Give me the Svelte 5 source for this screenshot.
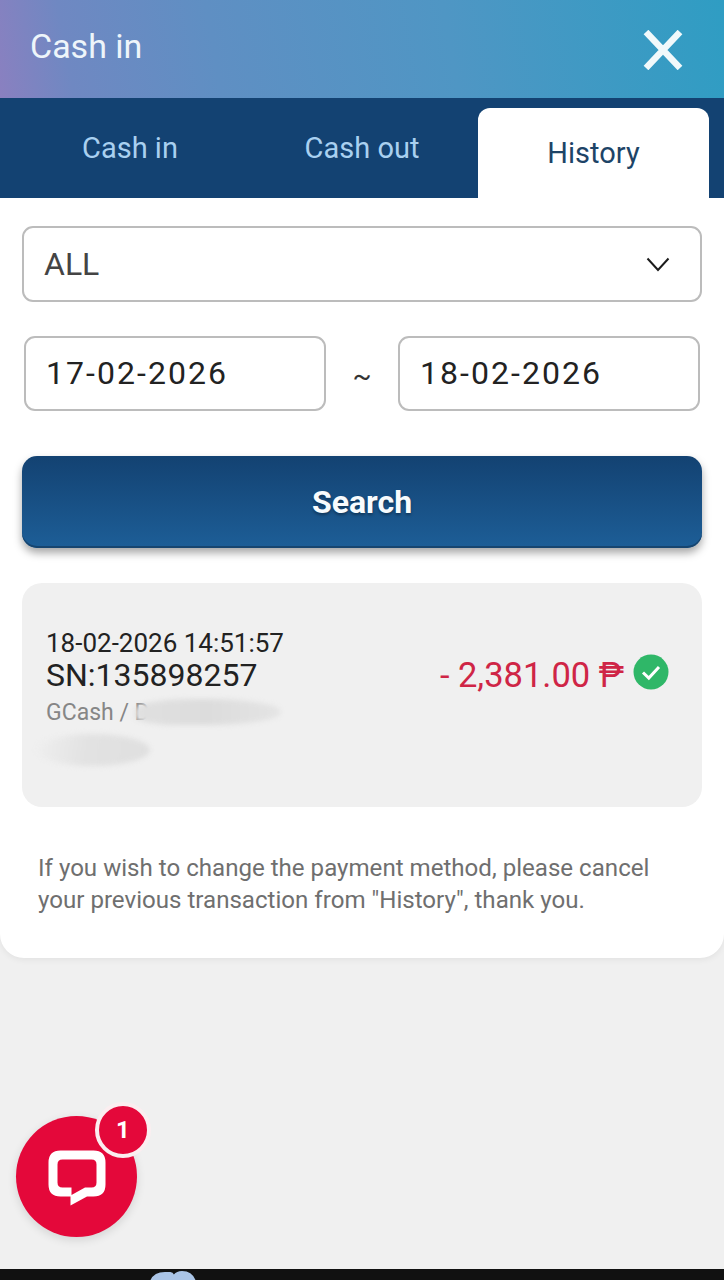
<script lang="ts">
const tabs = ["Cash in", "Cash out"];
</script>

<div class="page">
  <div class="panel">
    <header class="top">
      <span class="title">Cash in</span>
      <svg class="close" viewBox="0 0 40 40" aria-label="Close">
        <path d="M3 2 L37 38 M37 2 L3 38" stroke="#f1f9fb" stroke-width="6.5" fill="none" />
      </svg>
    </header>

    <nav class="tabs">
      {#each tabs as tab}
        <button class="tab">{tab}</button>
      {/each}
      <button class="tab on">History</button>
    </nav>

    <div class="body">
      <div class="select">
        <span>ALL</span>
        <svg class="chev" viewBox="0 0 24 15"><path d="M1.5 1.5 L12 13 L22.5 1.5" fill="none" stroke="#1c1c1c" stroke-width="2" /></svg>
      </div>

      <div class="dates">
        <div class="date">17-02-2026</div>
        <span class="tilde">~</span>
        <div class="date">18-02-2026</div>
      </div>

      <button class="search">Search</button>

      <div class="card">
        <div class="info">
          <div class="when">18-02-2026 14:51:57</div>
          <div class="sn">SN:135898257</div>
          <div class="method">GCash / D</div>
          <!-- redaction smears from the source screenshot -->
          <i class="smear one"></i>
          <i class="smear two"></i>
        </div>
        <div class="amount">
          <span>- 2,381.00 ₱</span>
          <svg class="ok" viewBox="0 0 36 36">
            <circle cx="18" cy="18" r="17.5" fill="#2fb768" />
            <path d="M10 18.5 L15.8 24 L26 13" fill="none" stroke="#fff" stroke-width="3" />
          </svg>
        </div>
      </div>

      <p class="note">If you wish to change the payment method, please cancel your previous transaction from "History", thank you.</p>
    </div>
  </div>

  <div class="chat">
    <svg viewBox="0 0 60 60" class="bubble">
      <path d="M13.5 2.5 H46.5 Q58.5 2.5 58.5 14.5 V36.5 Q58.5 48.5 46.5 48.5 H40 L23.5 57.5 V48.5 H13.5 Q1.5 48.5 1.5 36.5 V14.5 Q1.5 2.5 13.5 2.5 Z M15.5 11.5 Q10.5 11.5 10.5 16.5 V34.5 Q10.5 39.5 15.5 39.5 H24.5 V47 L38 39.5 H44.5 Q49.5 39.5 49.5 34.5 V16.5 Q49.5 11.5 44.5 11.5 Z" fill="#fff" fill-rule="evenodd" />
    </svg>
    <span class="badge">1</span>
  </div>

  <div class="navbar">
    <svg class="navbit" viewBox="0 0 50 10"><path d="M0 10 Q4 1 16 1 H22 Q25 1 26 4 Q29 0 35 0 Q46 0 50 10 Z" fill="#aac4e6" /></svg>
  </div>
</div>

<style>
  :global(body) {
    margin: 0;
    background: #f0f0f0;
    font-family: Roboto, "Liberation Sans", sans-serif;
  }
  .page {
    position: relative;
    height: 1280px;
    overflow: hidden;
    display: flex;
    flex-direction: column;
    background: #f0f0f0;
  }
  .panel {
    background: #fff;
    border-radius: 0 0 24px 24px;
    box-shadow: 0 2px 6px rgba(0, 0, 0, 0.06);
    overflow: hidden;
  }
  .top {
    height: 98px;
    box-sizing: border-box;
    padding: 0 41px 0 30px;
    display: flex;
    align-items: center;
    justify-content: space-between;
    background: linear-gradient(80deg, #8a80c0 0%, #6f88c2 10%, #5f8fc3 30%, #4f96c4 62%, #2f9dc3 100%);
  }
  .title {
    font-size: 34px;
    color: #eef5fa;
    margin-top: -6px;
  }
  .close {
    width: 40px;
    height: 40px;
    margin-top: 2px;
  }
  .tabs {
    height: 100px;
    box-sizing: border-box;
    padding: 10px 15px 0 14px;
    display: grid;
    grid-template-columns: 232px 232px 231px;
    background: #134272;
  }
  .tab {
    border: 0;
    background: none;
    padding: 0 0 10px;
    font: inherit;
    font-size: 29px;
    color: #a9d0f0;
  }
  .tab.on {
    padding: 0;
    background: #fff;
    color: #1d4467;
    border-radius: 12px 12px 0 0;
  }
  .body {
    padding: 28px 22px 42px;
  }
  .select {
    height: 76px;
    box-sizing: border-box;
    padding: 0 30px 0 20px;
    display: flex;
    align-items: center;
    justify-content: space-between;
    border: 2px solid #bcbcbc;
    border-radius: 11px;
    font-size: 32px;
    color: #444;
  }
  .chev {
    width: 24px;
    height: 15px;
  }
  .dates {
    margin: 34px 2px 0;
    display: grid;
    grid-template-columns: 302px 1fr 302px;
    align-items: center;
  }
  .date {
    height: 75px;
    box-sizing: border-box;
    padding: 0 0 2px 20px;
    display: flex;
    align-items: center;
    border: 2px solid #bcbcbc;
    border-radius: 11px;
    font-size: 32px;
    letter-spacing: 2.05px;
    color: #222;
  }
  .tilde {
    text-align: center;
    font-size: 28px;
    color: #333;
    padding-top: 3px;
  }
  .search {
    display: block;
    width: 100%;
    height: 92px;
    margin-top: 45px;
    border: 0;
    border-radius: 15px;
    background: linear-gradient(180deg, #134272 0%, #1d5e97 100%);
    box-shadow: inset 0 -2px 0 #17456f, 0 5px 9px rgba(0, 0, 0, 0.35);
    font: inherit;
    font-size: 32px;
    font-weight: 700;
    color: #f8fbfd;
    text-shadow: 0 2px 3px rgba(0, 0, 0, 0.35);
  }
  .card {
    height: 224px;
    box-sizing: border-box;
    margin-top: 35px;
    padding: 46px 33px 0 24px;
    display: flex;
    justify-content: space-between;
    background: #f0f0f0;
    border-radius: 20px;
  }
  .info {
    position: relative;
  }
  .when {
    font-size: 26px;
    line-height: 29px;
    color: #222;
  }
  .sn {
    font-size: 32px;
    line-height: 34px;
    color: #222;
  }
  .method {
    font-size: 23px;
    line-height: 42px;
    color: #868686;
  }
  .smear {
    position: absolute;
    filter: blur(2.5px);
  }
  .smear.one {
    left: 89px;
    top: 70px;
    width: 146px;
    height: 26px;
    border-radius: 40% 50% 50% 30%;
    background: linear-gradient(90deg, #e0e0e0, #dcdcdc 50%, #e4e4e4);
  }
  .smear.two {
    left: -10px;
    top: 105px;
    width: 114px;
    height: 32px;
    border-radius: 50%;
    background: linear-gradient(100deg, #efefef, #e2e2e2 45%, #dfdfdf);
  }
  .amount {
    display: flex;
    align-items: center;
    gap: 9px;
    height: 36px;
    margin-top: 25px;
    font-size: 34.5px;
    color: #cf2546;
  }
  .amount span {
    padding-top: 6px;
  }
  .ok {
    width: 36px;
    height: 36px;
  }
  .note {
    margin: 45px 16px 0;
    font-size: 24.1px;
    line-height: 32px;
    color: #6f6f6f;
  }
  .chat {
    position: absolute;
    left: 16px;
    top: 1116px;
    width: 121px;
    height: 121px;
    display: flex;
    align-items: center;
    justify-content: center;
    border-radius: 50%;
    background: #e4083a;
    box-shadow: 0 3px 10px rgba(0, 0, 0, 0.12);
  }
  .bubble {
    width: 60px;
    height: 60px;
    margin-top: 2px;
  }
  .badge {
    position: absolute;
    left: 79px;
    top: -14px;
    width: 48px;
    height: 48px;
    display: flex;
    align-items: center;
    justify-content: center;
    border: 4px solid #fbeef0;
    border-radius: 50%;
    background: #e4083a;
    color: #fff;
    font-size: 24px;
    font-weight: 700;
  }
  .navbar {
    position: absolute;
    left: 0;
    right: 0;
    bottom: 0;
    height: 11px;
    background: #111;
  }
  .navbit {
    position: absolute;
    left: 148px;
    bottom: 0;
    width: 50px;
    height: 9px;
  }
</style>
